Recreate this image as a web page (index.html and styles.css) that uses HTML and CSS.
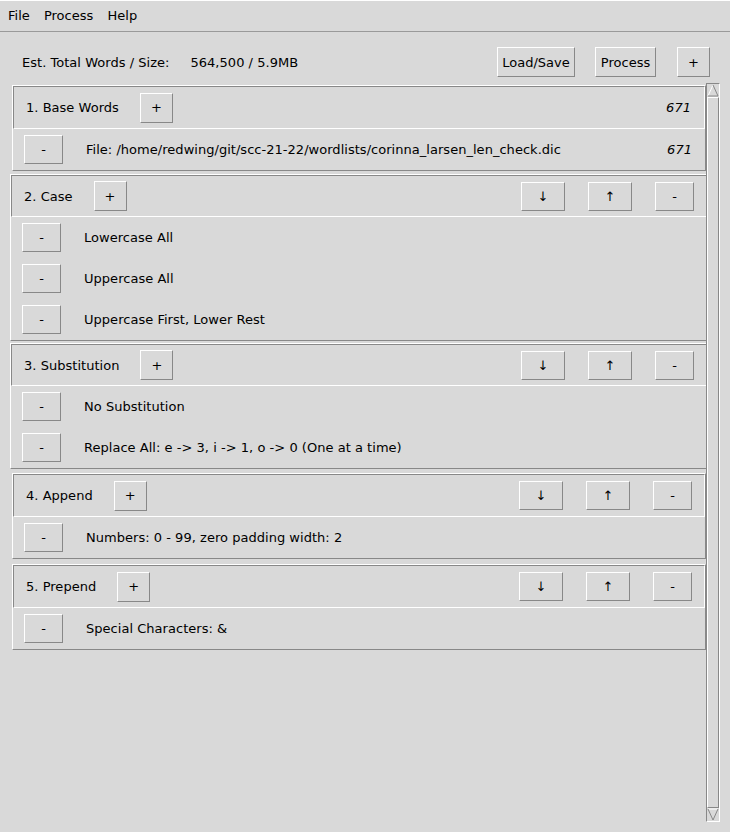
FILE: index.html
```html
<!DOCTYPE html>
<html>
<head>
<meta charset="utf-8">
<link rel="stylesheet" href="styles.css">
</head>
<body>
<div class="menubar">
  <span class="menu-item">File</span>
  <span class="menu-item">Process</span>
  <span class="menu-item">Help</span>
</div>
<div class="toolbar">
  <span class="est-label">Est. Total Words / Size:</span>
  <span class="est-value">564,500 / 5.9MB</span>
  <span class="spacer"></span>
  <button class="btn btn-load">Load/Save</button>
  <button class="btn btn-process">Process</button>
  <button class="btn btn-plus">+</button>
</div>
<div class="main">
  <div class="list">
    <section class="sect">
      <div class="sect-head">
        <span class="sect-title">1. Base Words</span>
        <button class="btn btn-add">+</button>
        <span class="spacer"></span>
        <span class="count">671</span>
      </div>
      <div class="sect-body">
        <div class="row">
          <button class="btn btn-minus">-</button>
          <span class="row-text">File: /home/redwing/git/scc-21-22/wordlists/corinna_larsen_len_check.dic</span>
          <span class="spacer"></span>
          <span class="count count-row">671</span>
        </div>
      </div>
    </section>

    <section class="sect sect-wide sect-2">
      <div class="sect-head">
        <span class="sect-title">2. Case</span>
        <button class="btn btn-add">+</button>
        <span class="spacer"></span>
        <div class="moves">
          <button class="btn btn-move">↓</button>
          <button class="btn btn-move">↑</button>
          <button class="btn btn-del">-</button>
        </div>
      </div>
      <div class="sect-body">
        <div class="row"><button class="btn btn-minus">-</button><span class="row-text">Lowercase All</span></div>
        <div class="row"><button class="btn btn-minus">-</button><span class="row-text">Uppercase All</span></div>
        <div class="row"><button class="btn btn-minus">-</button><span class="row-text">Uppercase First, Lower Rest</span></div>
      </div>
    </section>

    <section class="sect sect-wide sect-3">
      <div class="sect-head">
        <span class="sect-title">3. Substitution</span>
        <button class="btn btn-add">+</button>
        <span class="spacer"></span>
        <div class="moves">
          <button class="btn btn-move">↓</button>
          <button class="btn btn-move">↑</button>
          <button class="btn btn-del">-</button>
        </div>
      </div>
      <div class="sect-body">
        <div class="row"><button class="btn btn-minus">-</button><span class="row-text">No Substitution</span></div>
        <div class="row"><button class="btn btn-minus">-</button><span class="row-text">Replace All: e -&gt; 3, i -&gt; 1, o -&gt; 0 (One at a time)</span></div>
      </div>
    </section>

    <section class="sect sect-4">
      <div class="sect-head">
        <span class="sect-title">4. Append</span>
        <button class="btn btn-add">+</button>
        <span class="spacer"></span>
        <div class="moves">
          <button class="btn btn-move">↓</button>
          <button class="btn btn-move">↑</button>
          <button class="btn btn-del">-</button>
        </div>
      </div>
      <div class="sect-body">
        <div class="row"><button class="btn btn-minus">-</button><span class="row-text">Numbers: 0 - 99, zero padding width: 2</span></div>
      </div>
    </section>

    <section class="sect sect-5">
      <div class="sect-head">
        <span class="sect-title">5. Prepend</span>
        <button class="btn btn-add">+</button>
        <span class="spacer"></span>
        <div class="moves">
          <button class="btn btn-move">↓</button>
          <button class="btn btn-move">↑</button>
          <button class="btn btn-del">-</button>
        </div>
      </div>
      <div class="sect-body">
        <div class="row"><button class="btn btn-minus">-</button><span class="row-text">Special Characters: &amp;</span></div>
      </div>
    </section>
  </div>
  <div class="scrollbar">
    <svg class="arrow" width="12" height="13" viewBox="0 0 12 13">
      <polygon points="6,1 11,12 1,12" fill="#d9d9d9"/>
      <polyline points="1,12 6,1" fill="none" stroke="#ffffff" stroke-width="1"/>
      <polyline points="6,1 11,12 1,12" fill="none" stroke="#888888" stroke-width="1"/>
    </svg>
    <div class="slider"></div>
    <svg class="arrow" width="12" height="13" viewBox="0 0 12 13">
      <polygon points="1,1 11,1 6,12" fill="#d9d9d9"/>
      <polyline points="1,1 11,1" fill="none" stroke="#ffffff" stroke-width="1"/>
      <polyline points="1,1 6,12 11,1" fill="none" stroke="#888888" stroke-width="1"/>
    </svg>
  </div>
</div>
</body>
</html>
```

FILE: styles.css
```css
html, body {
  margin: 0;
  padding: 0;
  background: #d9d9d9;
  width: 730px;
  height: 832px;
  overflow: hidden;
  font-family: "DejaVu Sans", sans-serif;
  font-size: 13px;
  letter-spacing: 0.03px;
  color: #000;
}

.menubar {
  display: flex;
  align-items: center;
  padding-left: 8px;
  padding-bottom: 2px;
  gap: 14px;
  border-top: 1px solid #fff;
  border-bottom: 1px solid #9a9a9a;
  box-sizing: border-box;
  height: 32px;
}

.toolbar {
  display: flex;
  align-items: center;
  height: 30px;
  margin-top: 15px;
  padding-left: 22px;
  padding-right: 20px;
}

.est-value {
  margin-left: 21px;
}

.spacer {
  flex: 1;
}

.btn {
  font-family: "DejaVu Sans", sans-serif;
  font-size: 13px;
  letter-spacing: 0.03px;
  color: #000;
  background: #d9d9d9;
  border: 1px solid;
  border-color: #ffffff #888888 #888888 #ffffff;
  padding: 0;
  margin: 0;
  height: 30px;
  box-sizing: border-box;
}

.btn-load { width: 78px; }
.btn-process { width: 61px; margin-left: 20px; }
.btn-plus { width: 33px; margin-left: 21px; }

.main {
  display: flex;
  margin-top: 6px;
}

.list {
  width: 706px;
  display: flex;
  flex-direction: column;
  padding-top: 2px;
}

.sect {
  margin-left: 12px;
  width: 694px;
  box-sizing: border-box;
  border: 1px solid;
  border-color: #ffffff #888888 #888888 #ffffff;
  margin-bottom: 3px;
}

.sect-wide {
  margin-left: 10px;
  width: 698px;
}

.sect-3 { margin-bottom: 4px; }
.sect-4 { margin-bottom: 5px; }
.sect-2 { margin-bottom: 2px; }

.sect-head {
  display: flex;
  align-items: center;
  height: 43px;
  box-sizing: border-box;
  border: 1px solid;
  border-color: #888888 #ffffff #ffffff #888888;
  padding-left: 12px;
  padding-right: 12px;
}

.sect-wide .sect-head {
  height: 42px;
}

.sect-title {
  margin-right: 21px;
}

.btn-add {
  width: 33px;
}

.moves {
  display: flex;
  gap: 23px;
}

.btn-move { width: 44px; height: 29px; }
.btn-del { width: 39px; height: 29px; }

.count {
  font-style: italic;
  margin-right: 1px;
}

.count-row {
  margin-right: 0;
}

.sect-body {
  display: flex;
  flex-direction: column;
}

.row {
  display: flex;
  align-items: center;
  height: 41px;
  padding-left: 11px;
  padding-right: 13px;
}

.btn-minus {
  width: 39px;
  height: 29px;
  margin-right: 23px;
}

.scrollbar {
  width: 14px;
  height: 739px;
  box-sizing: border-box;
  border: 1px solid;
  border-color: #888888 #ffffff #ffffff #888888;
  display: flex;
  flex-direction: column;
}

.arrow {
  display: block;
  flex: none;
}

.slider {
  flex: 1;
  box-sizing: border-box;
  border: 1px solid;
  border-color: #ffffff #888888 #888888 #ffffff;
}
```
